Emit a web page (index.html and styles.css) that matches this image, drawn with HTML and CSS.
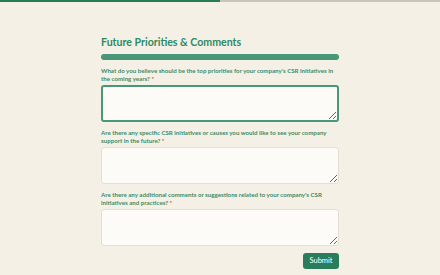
FILE: index.html
```html
<!DOCTYPE html>
<html>

<head>
	<title>Future Priorities &amp; Comments</title>
	<link rel="stylesheet" href="styles.css">
</head>

<body>
	<div class="top-progress">
		<div class="top-progress-fill"></div>
	</div>

	<div class="survey-container">
		<h1>Future Priorities &amp; Comments</h1>
		<div class="section-bar"></div>

		<form class="survey-form">
			<div class="field">
				<label for="q1">What do you believe should be the top priorities for your company's CSR initiatives in the coming years? <span class="required">*</span></label>
				<textarea id="q1" class="focused"></textarea>
			</div>

			<div class="field">
				<label for="q2">Are there any specific CSR initiatives or causes you would like to see your company support in the future? <span class="required">*</span></label>
				<textarea id="q2"></textarea>
			</div>

			<div class="field">
				<label for="q3">Are there any additional comments or suggestions related to your company's CSR initiatives and practices? <span class="required">*</span></label>
				<textarea id="q3"></textarea>
			</div>

			<div class="actions">
				<button type="button">Submit</button>
			</div>
		</form>
	</div>
</body>

</html>
```

FILE: styles.css
```css
body {
	font-family: Lato, "Open Sans", sans-serif;
	background-color: #f4f0e6;
	margin: 0;
	padding: 0;
}

.top-progress {
	height: 2px;
	background-color: #cbc5bc;
}

.top-progress-fill {
	width: 50%;
	height: 100%;
	background-color: #2a7a58;
}

.survey-container {
	width: 238px;
	margin: 0 auto;
	padding-top: 32px;
}

h1 {
	margin: 0;
	font-size: 10.6px;
	font-weight: 700;
	line-height: 16px;
	color: #2f8a64;
}

.section-bar {
	height: 6px;
	margin-top: 4px;
	border-radius: 3px;
	background-color: #4a9678;
}

.survey-form {
	margin-top: 7px;
}

.field {
	margin-bottom: 7px;
}

label {
	display: block;
	font-size: 6.15px;
	font-weight: 700;
	line-height: 8px;
	color: #3d8c6b;
	margin-bottom: 2px;
}

.required {
	color: #d9534f;
}

textarea {
	display: block;
	box-sizing: border-box;
	width: 100%;
	height: 37px;
	margin: 0;
	background-color: #fcfbf7;
	border: 1px solid #e4dfd5;
	border-radius: 3px;
	font-family: inherit;
}

textarea.focused {
	border: 2px solid #4a9678;
}

.actions {
	display: flex;
	justify-content: flex-end;
}

button {
	padding: 3px 6px;
	font-family: inherit;
	font-size: 7.5px;
	font-weight: 400;
	line-height: 10px;
	color: white;
	background-color: #2a7d5c;
	border: none;
	border-radius: 3px;
	height: 16px;
	width: 36px;
	cursor: pointer;
}
```
